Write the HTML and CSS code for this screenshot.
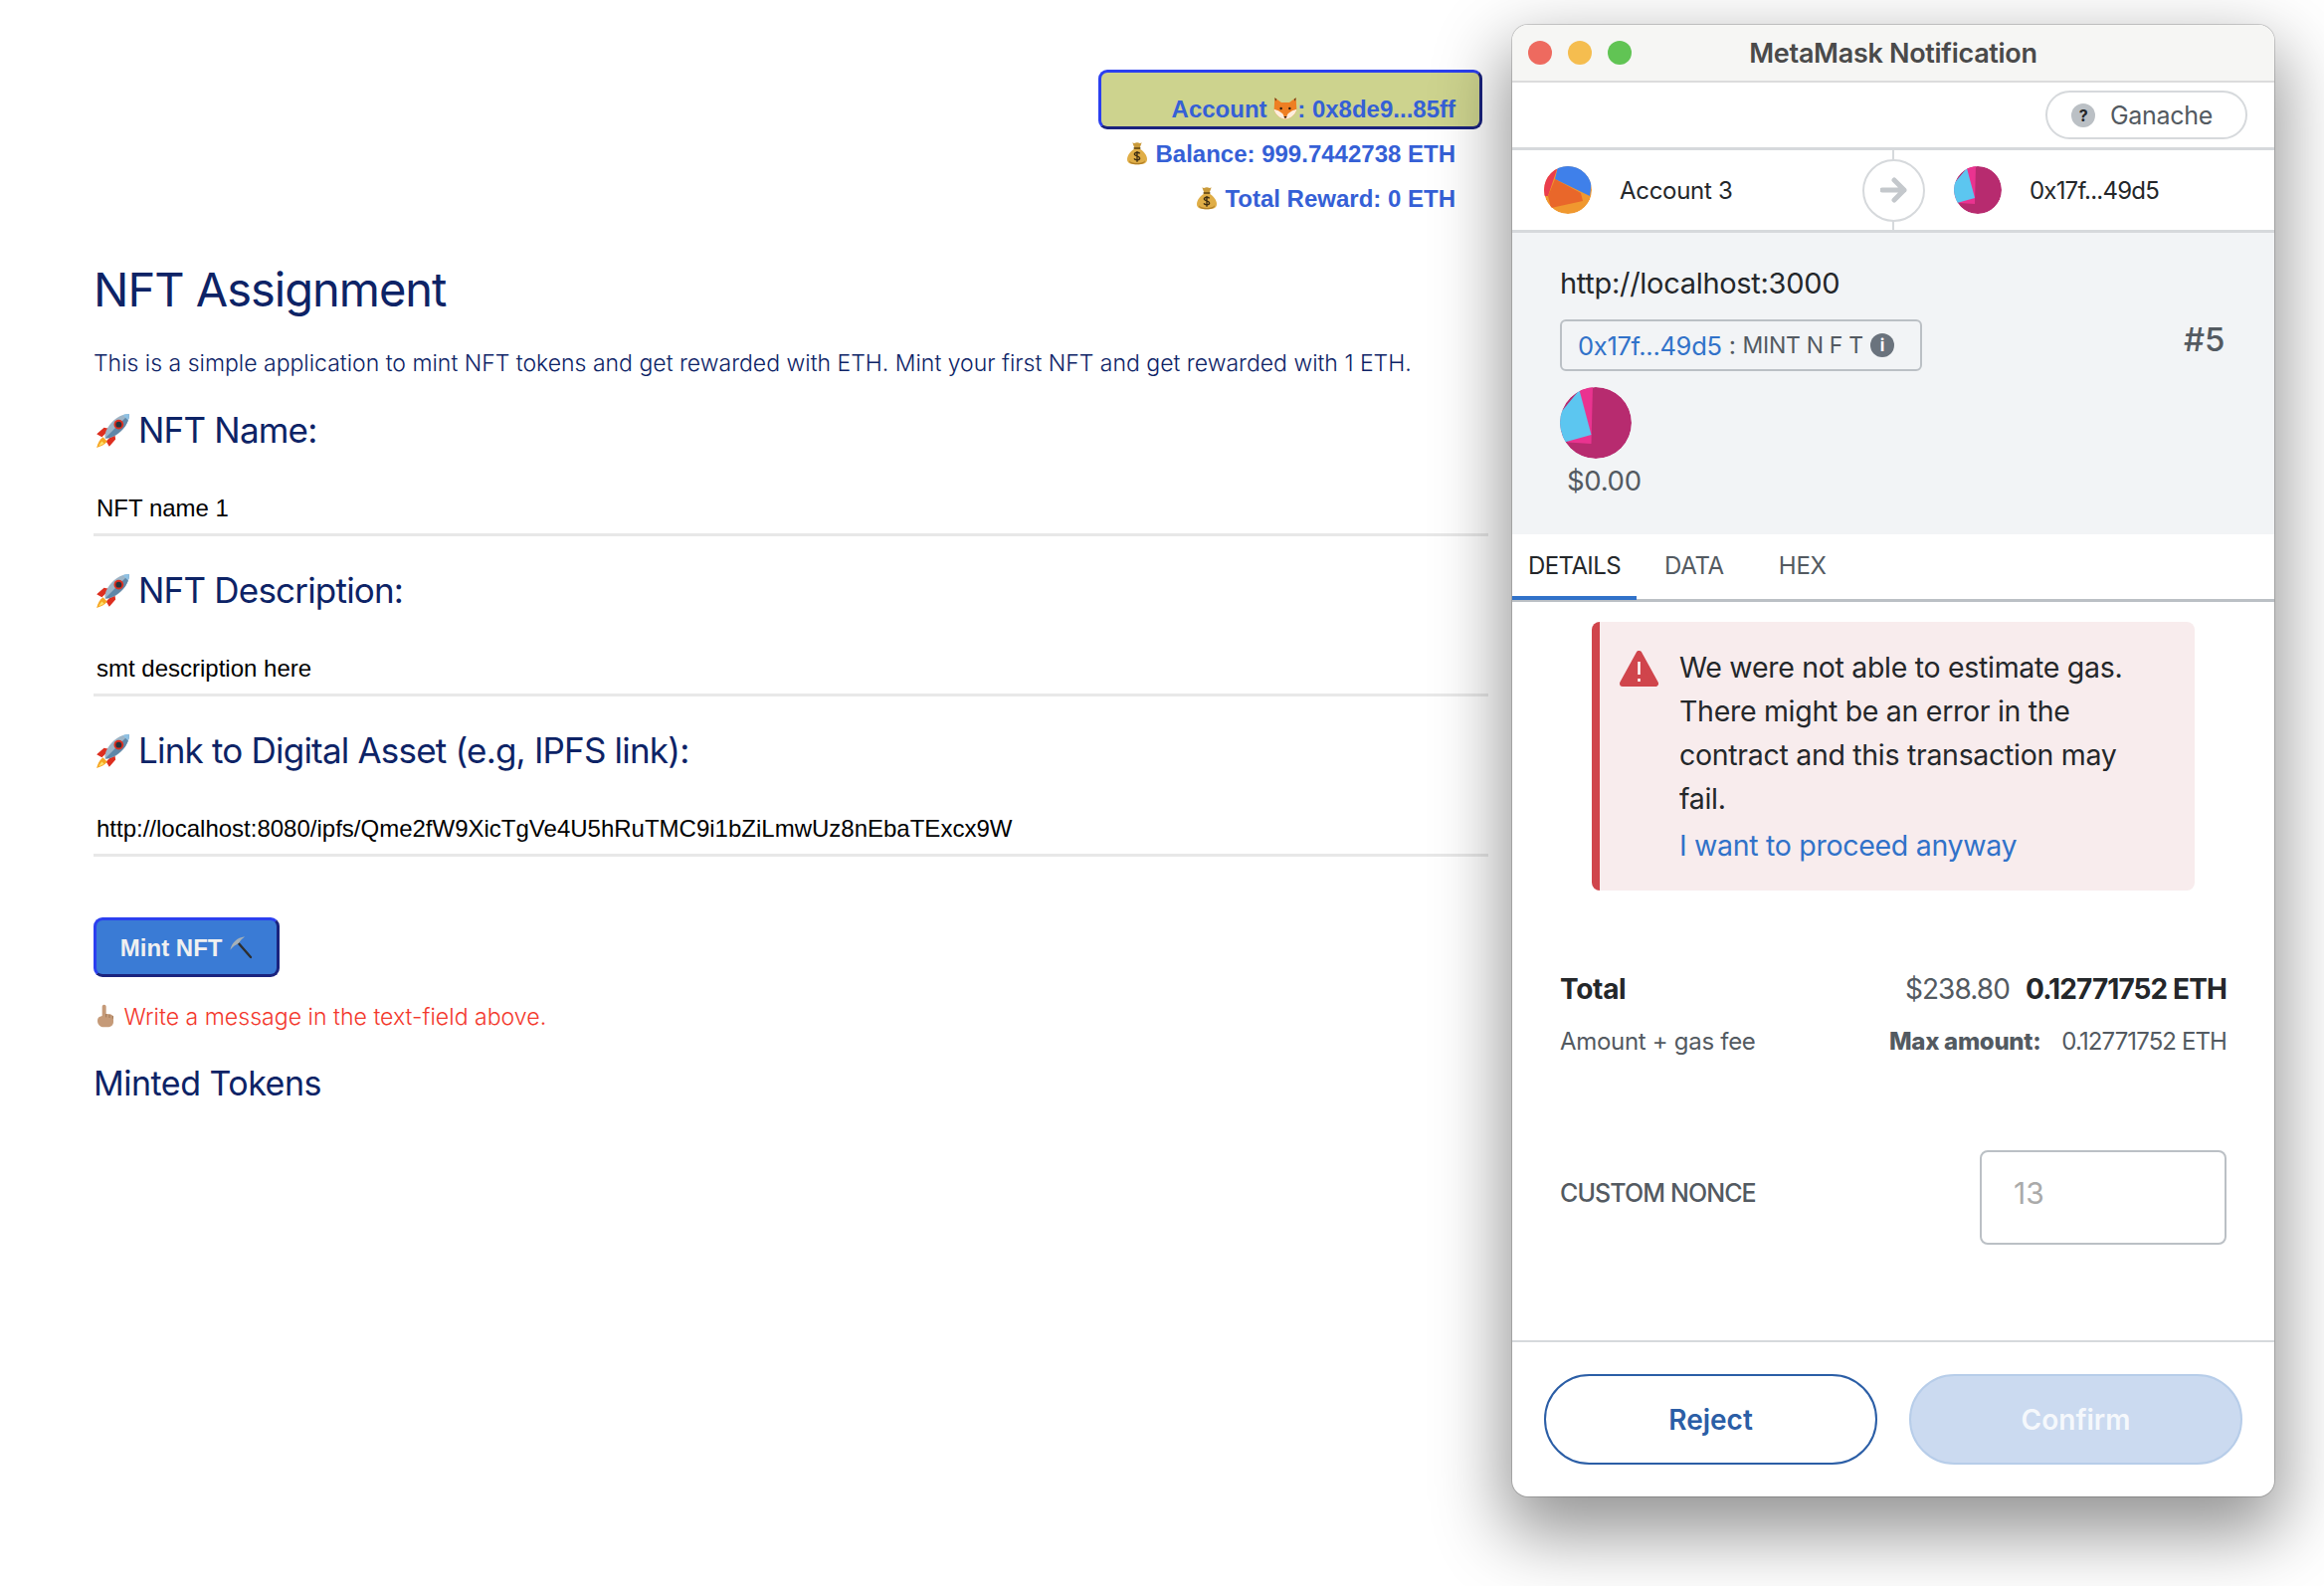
FILE: index.html
```html
<!DOCTYPE html>
<html lang="en">
<head>
    <meta charset="UTF-8">
    <title>NFT Assignment</title>
    <link rel="stylesheet" href="styles.css">
</head>
<body>
    <svg class="sprite" aria-hidden="true">
        <symbol id="rocket" viewBox="0 0 36 36">
            <path d="M3 21l7-6 6 1-8 8zM15 33l6-7-1-6-8 8z" fill="#dd2e1f"/>
            <path d="M9 24c-3 2-5 6-6 10 4-1 8-3 10-6z" fill="#f6a623"/>
            <path d="M8 28c-1 1-2 3-3 4 2 0 3-1 5-2z" fill="#ffe16b"/>
            <path d="M11 25c-1-6 4-14 11-19 4-3 9-4 12-4 0 3-1 8-4 12-5 7-13 12-19 11z" fill="#9db4c6"/>
            <path d="M11 25c5 1 13-4 19-11 3-4 4-9 4-12z" fill="#5f87a8"/>
            <circle cx="24" cy="12" r="4.600" fill="#dd2e1f"/>
            <circle cx="24" cy="12" r="2.800" fill="#27323c"/>
            <path d="M28 3c2-1 4-1 6-1 0 2 0 4-1 6z" fill="#8fc1e3"/>
        </symbol>
        <symbol id="fox" viewBox="0 0 36 36">
            <path d="M2 2l10 7h12l10-7 1 17c0 6-9 15-17 15S1 25 1 19z" fill="#ee7f23"/>
            <path d="M1 19c4 1 9 3 13 7l4 8C10 34 1 25 1 19zM35 19c-4 1-9 3-13 7l-4 8c8 0 17-9 17-15z" fill="#fdeedd"/>
            <circle cx="11.500" cy="18" r="1.800" fill="#2b1a10"/>
            <circle cx="24.500" cy="18" r="1.800" fill="#2b1a10"/>
            <path d="M15.500 30h5L18 33z" fill="#2b1a10"/>
            <path d="M2 2l3 2-2 3zM34 2l-3 2 2 3z" fill="#5a3a20"/>
        </symbol>
        <symbol id="moneybag" viewBox="0 0 36 36">
            <path d="M11 2c3 2 5 0 7 0s4 2 7 0l-3 8h-8z" fill="#c99a3a"/>
            <path d="M13 9h10v3H13z" fill="#7a5a1c"/>
            <path d="M13 12h10c6 4 10 10 10 15 0 6-5 8-15 8S3 33 3 27c0-5 4-11 10-15z" fill="#e0ae47"/>
            <path d="M6 29c2 3 6 4 12 4s10-1 12-4c0 4-5 6-12 6S6 33 6 29z" fill="#b07f28"/>
            <path d="M22 18.500c-1-2-7-2.500-8 .5s8 3 8 6.500-7 3.500-8.500 .5M18 15v16" fill="none" stroke="#3d2c10" stroke-width="2"/>
        </symbol>
        <symbol id="pick" viewBox="0 0 36 36">
            <path d="M13 10l20 23" stroke="#2e2e2e" stroke-width="3.500" stroke-linecap="round"/>
            <path d="M2 22C5 11 12 4 24 2c-3 3-6 5-7 7l-2 3c-4 2-9 5-13 10z" fill="#a5b0b8"/>
        </symbol>
        <symbol id="hand" viewBox="0 0 36 36">
            <path d="M13 4c0-4 6-4 6 0v11c5 0 10 1 11 4v8c0 5-4 8-9 8h-5c-6 0-10-4-10-10 0-4 2-6 7-7z" fill="#c59a78"/>
            <path d="M19 15v5M24 16v5M29 18v4" stroke="#96704f" stroke-width="1.200"/>
        </symbol>
    </svg>

    <main class="app">
        <div class="wallet">
            <button class="account-btn">Account <svg class="emoji"><use href="#fox"/></svg>: 0x8de9...85ff</button>
            <div class="wallet-line"><svg class="emoji"><use href="#moneybag"/></svg> Balance: 999.7442738 ETH</div>
            <div class="wallet-line"><svg class="emoji"><use href="#moneybag"/></svg> Total Reward: 0 ETH</div>
        </div>

        <h1>NFT Assignment</h1>
        <p class="intro">This is a simple application to mint NFT tokens and get rewarded with ETH. Mint your first NFT and get rewarded with 1 ETH.</p>

        <div class="form-group">
            <label for="nftName"><svg class="emoji rocket"><use href="#rocket"/></svg> NFT Name:</label>
            <input type="text" id="nftName" value="NFT name 1">
        </div>
        <div class="form-group">
            <label for="nftDesc"><svg class="emoji rocket"><use href="#rocket"/></svg> NFT Description:</label>
            <input type="text" id="nftDesc" value="smt description here">
        </div>
        <div class="form-group">
            <label for="nftLink"><svg class="emoji rocket"><use href="#rocket"/></svg> Link to Digital Asset (e.g, IPFS link):</label>
            <input type="text" id="nftLink" value="http://localhost:8080/ipfs/Qme2fW9XicTgVe4U5hRuTMC9i1bZiLmwUz8nEbaTExcx9W">
        </div>

        <button class="mint-btn">Mint NFT <svg class="emoji"><use href="#pick"/></svg></button>
        <p class="status"><svg class="emoji"><use href="#hand"/></svg> Write a message in the text-field above.</p>
        <h2>Minted Tokens</h2>
    </main>

    <section class="popup">
        <header class="titlebar">
            <span class="light red"></span>
            <span class="light yellow"></span>
            <span class="light green"></span>
            <span class="popup-title">MetaMask Notification</span>
        </header>

        <div class="network-row">
            <div class="network-pill"><span class="help-dot">?</span>Ganache</div>
        </div>

        <div class="party-row">
            <div class="party">
                <svg class="identicon" viewBox="0 0 48 48">
                    <circle cx="24" cy="24" r="24" fill="#f0982f"/>
                    <path d="M14 0L4 30L-2 30L0 0z" fill="#ea3d4d"/>
                    <path d="M14 0L11 13L46 30L50 0z" fill="#3f80ea"/>
                    <path d="M11 13L37 27L39 35L7 42L4 30z" fill="#e9672a"/>
                </svg>
                <span>Account 3</span>
            </div>
            <div class="party-arrow">
                <svg viewBox="0 0 28 26" width="28" height="26"><path d="M2 13h22M14 3l10 10-10 10" fill="none" stroke="#c4c8cc" stroke-width="5" stroke-linecap="round" stroke-linejoin="round"/></svg>
            </div>
            <div class="party party-to">
                <svg class="identicon" viewBox="0 0 48 48"><use href="#jazz"/></svg>
                <span class="short-addr">0x17f...49d5</span>
            </div>
        </div>

        <div class="summary">
            <div class="origin">http://localhost:3000</div>
            <div class="method-row">
                <div class="method"><a>0x17f...49d5</a><span class="method-sep">:</span><span class="method-name">MINT N F T</span><span class="info-dot">i</span></div>
                <span class="nonce-tag">#5</span>
            </div>
            <svg class="identicon big" viewBox="0 0 48 48">
                <g id="jazz">
                    <circle cx="24" cy="24" r="24" fill="#b72b6f"/>
                    <path d="M3 42L7 42L5 39z" fill="#f0982f"/>
                    <path d="M13 2L22 -1L21 38L5 37z" fill="#ea3390"/>
                    <path d="M13 2L21 32L3 37L-2 20z" fill="#5cc6f0"/>
                </g>
            </svg>
            <div class="fiat">$0.00</div>
        </div>

        <nav class="tabs">
            <a class="tab active">DETAILS</a>
            <a class="tab">DATA</a>
            <a class="tab">HEX</a>
        </nav>

        <div class="alert">
            <svg class="alert-icon" viewBox="0 0 39 38"><path d="M19.500 3L36 33H3z" fill="#d0454c" stroke="#d0454c" stroke-width="6" stroke-linejoin="round"/><path d="M19.500 11v13M19.500 28v3" stroke="#fff" stroke-width="2.500"/></svg>
            <div class="alert-body">
                <p>We were not able to estimate gas. There might be an error in the contract and this transaction may fail.</p>
                <a>I want to proceed anyway</a>
            </div>
        </div>

        <div class="totals">
            <div class="total-row">
                <strong>Total</strong>
                <span class="total-val"><span class="usd">$238.80</span><strong>0.12771752 ETH</strong></span>
            </div>
            <div class="total-row sub">
                <span>Amount + gas fee</span>
                <span class="total-val"><strong>Max amount:</strong><span class="max-val">0.12771752 ETH</span></span>
            </div>
        </div>

        <div class="nonce-row">
            <label for="nonce">CUSTOM NONCE</label>
            <input type="text" id="nonce" placeholder="13">
        </div>

        <footer class="actions">
            <button class="pill reject">Reject</button>
            <button class="pill confirm">Confirm</button>
        </footer>
    </section>
</body>
</html>
```

FILE: styles.css
```css
* {
    box-sizing: border-box;
}
html, body {
    margin: 0;
    height: 100%;
}
body {
    position: relative;
    background: #fff;
    overflow: hidden;
    font-family: Inter, sans-serif;
}
.sprite {
    position: absolute;
    width: 0;
    height: 0;
}
.emoji {
    width: 24px;
    height: 24px;
    vertical-align: -3px;
}

/* dapp page */
.app {
    width: 1496px;
    padding: 70px 0 0 94px;
    color: #0d2366;
}
.wallet {
    display: flex;
    flex-direction: column;
    align-items: flex-end;
    margin-right: 33px;
    font: bold 24px "Liberation Sans", sans-serif;
    color: #3560d6;
}
.account-btn {
    width: 386px;
    height: 60px;
    margin-right: -27px;
    padding: 20px 24px 0 0;
    text-align: right;
    font: inherit;
    color: inherit;
    background: #cdd38e;
    border: 3px solid;
    border-color: #2b3ff0 #1a237e #1a237e #2b3ff0;
    border-radius: 9px;
}
.wallet-line {
    margin-top: 15px;
    line-height: 30px;
}
.account-btn + .wallet-line {
    margin-top: 10px;
}
h1 {
    margin: 48px 0 0;
    font-size: 47px;
    font-weight: 400;
    line-height: 56px;
    letter-spacing: -1px;
}
.intro {
    margin: 31px 0 0;
    font-size: 23px;
    font-weight: 300;
    line-height: 30px;
}
.form-group {
    height: 161px;
}
.intro + .form-group {
    margin-top: 30px;
}
label {
    display: block;
}
.form-group label {
    font-size: 35px;
    line-height: 44px;
    letter-spacing: -0.800px;
}
.emoji.rocket {
    width: 38px;
    height: 38px;
    margin-right: -2px;
    vertical-align: -7px;
}
.form-group input {
    display: block;
    width: 100%;
    height: 54px;
    margin-top: 31px;
    padding: 0 3px;
    border: 0;
    border-bottom: 3px solid #e8e8e8;
    outline: 0;
    background: transparent;
    color: #000;
    font: 24px "Liberation Sans", sans-serif;
}
.mint-btn {
    display: block;
    width: 187px;
    height: 60px;
    margin-top: 29px;
    padding: 2px 0 0;
    font: bold 24px "Liberation Sans", sans-serif;
    color: #f0f0f0;
    background: #3a7bd5;
    border: 3px solid;
    border-color: #2b3ff0 #1a237e #1a237e #2b3ff0;
    border-radius: 9px;
}
.status {
    margin: 24px 0 0;
    font-size: 23.100px;
    font-weight: 300;
    line-height: 32px;
    color: #f3382c;
}
h2 {
    margin: 29px 0 0;
    font-size: 34px;
    font-weight: 400;
    line-height: 44px;
    letter-spacing: -0.500px;
}

/* metamask window */
.popup {
    position: absolute;
    left: 1520px;
    top: 25px;
    width: 766px;
    height: 1479px;
    display: flex;
    flex-direction: column;
    background: #fff;
    border-radius: 16px;
    box-shadow: 0 0 0 1px rgba(0, 0, 0, 0.16), 0 30px 70px 8px rgba(0, 0, 0, 0.42);
    overflow: hidden;
    color: #24272a;
    letter-spacing: -0.300px;
}
.titlebar {
    position: relative;
    display: flex;
    flex: none;
    align-items: center;
    gap: 16px;
    height: 58px;
    padding-left: 16px;
    background: #f6f6f4;
    border-bottom: 2px solid #dcdcdc;
}
.light {
    width: 24px;
    height: 24px;
    border-radius: 50%;
}
.red { background: #ee6a5f; }
.yellow { background: #f5bd4f; }
.green { background: #61c454; }
.popup-title {
    position: absolute;
    left: 0;
    right: 0;
    text-align: center;
    font-size: 27px;
    font-weight: 600;
    color: #4a4a4a;
}
.network-row {
    display: flex;
    flex: none;
    justify-content: flex-end;
    align-items: center;
    height: 68px;
    padding-right: 27px;
    border-bottom: 3px solid #d6d9dc;
}
.network-pill {
    display: flex;
    align-items: center;
    width: 203px;
    height: 49px;
    padding-left: 24px;
    border: 2px solid #d6d9dc;
    border-radius: 25px;
    font-size: 25px;
    color: #535a61;
}
.help-dot {
    width: 24px;
    height: 24px;
    margin-right: 15px;
    border-radius: 50%;
    background: #bbc0c5;
    color: #24272a;
    font-size: 16px;
    font-weight: 700;
    line-height: 24px;
    text-align: center;
}
.party-row {
    position: relative;
    display: flex;
    flex: none;
    align-items: center;
    height: 83px;
    border-bottom: 3px solid #d6d9dc;
    font-size: 24px;
}
.party {
    display: flex;
    align-items: center;
    gap: 28px;
    width: 352px;
    padding-left: 32px;
}
.party-to {
    width: auto;
    padding-left: 29px;
}
.short-addr {
    letter-spacing: -0.800px;
}
.identicon {
    width: 48px;
    height: 48px;
    border-radius: 50%;
}
.identicon.big {
    display: block;
    width: 72px;
    height: 72px;
    margin-top: 16px;
}
/* connector line behind the arrow */
.party-row::before {
    content: "";
    position: absolute;
    left: 382px;
    top: 0;
    bottom: 0;
    width: 2px;
    background: #d6d9dc;
}
.party-arrow {
    position: relative;
    display: flex;
    flex: none;
    align-items: center;
    justify-content: center;
    width: 63px;
    height: 63px;
    border: 2px solid #d6d9dc;
    border-radius: 50%;
    background: #fff;
}
.summary {
    flex: none;
    height: 303px;
    padding: 31px 49px 0 48px;
    background: #f2f4f6;
}
.origin {
    font-size: 29px;
    line-height: 40px;
}
.method-row {
    display: flex;
    justify-content: space-between;
    align-items: flex-start;
    margin-top: 16px;
}
.method {
    display: flex;
    align-items: center;
    width: 364px;
    height: 52px;
    padding-left: 16px;
    border: 2px solid #bbc0c5;
    border-radius: 6px;
    font-size: 25px;
    color: #535a61;
}
.method a {
    color: #3172c9;
    font-size: 25.500px;
}
.method-sep {
    margin: 0 7px;
}
.method-name {
    font-size: 23px;
}
.info-dot {
    width: 24px;
    height: 24px;
    margin-left: 7px;
    border-radius: 50%;
    background: #6a737d;
    color: #fff;
    font-size: 17px;
    font-weight: 700;
    line-height: 24px;
    text-align: center;
}
.nonce-tag {
    margin: 2px 1px 0 0;
    font-size: 33px;
    font-weight: 500;
    line-height: 36px;
    color: #535a61;
}
.fiat {
    padding-left: 7px;
    font-size: 27.500px;
    line-height: 44px;
    color: #535a61;
}
.tabs {
    display: flex;
    flex: none;
    height: 68px;
    border-bottom: 3px solid #bbc0c5;
    font-size: 24px;
    color: #535a61;
}
.tab {
    height: 66px;
    padding: 17px 17px 0;
    line-height: 30px;
}
.tab.active {
    width: 125px;
    padding-left: 16px;
    letter-spacing: -0.600px;
    color: #24272a;
    border-bottom: 4px solid #3172c9;
}
.tab:nth-child(2) {
    padding: 17px 54px 0 28px;
}
.tab:nth-child(3) {
    padding-left: 1px;
}
.alert {
    display: flex;
    flex: none;
    gap: 21px;
    width: 606px;
    height: 270px;
    margin: 20px 0 0 80px;
    padding: 24px 30px 0 20px;
    background: #f8eced;
    border-left: 8px solid #d0454c;
    border-radius: 8px;
    font-size: 28.500px;
    line-height: 44px;
}
.alert-icon {
    flex: none;
    width: 39px;
    height: 38px;
    margin-top: 5px;
}
.alert-body p {
    margin: 0;
}
.alert-body a {
    display: block;
    margin-top: 3px;
    color: #3172c9;
}
.totals {
    flex: none;
    padding: 79px 48px 0;
}
.total-row {
    display: flex;
    justify-content: space-between;
    height: 53px;
    font-size: 28px;
    line-height: 40px;
}
.total-row strong {
    font-weight: 700;
}
.total-val {
    display: flex;
    gap: 16px;
    letter-spacing: -0.900px;
}
.usd {
    color: #535a61;
}
.total-row.sub {
    font-size: 24px;
    color: #535a61;
}
.total-row.sub .total-val {
    gap: 21px;
    letter-spacing: -0.300px;
}
.total-row.sub .max-val {
    letter-spacing: -0.900px;
}
.total-row.sub strong {
    font-weight: 800;
}
.nonce-row {
    display: flex;
    flex: none;
    justify-content: space-between;
    margin-top: 76px;
    padding: 0 48px;
}
.nonce-row label {
    margin-top: 27px;
    font-size: 25px;
    font-weight: 500;
    line-height: 32px;
    letter-spacing: -0.900px;
    color: #535a61;
}
.nonce-row input {
    width: 248px;
    height: 95px;
    padding: 0 32px 10px;
    border: 2px solid #bbc0c5;
    border-radius: 8px;
    outline: 0;
    font: 30px Inter, sans-serif;
}
.nonce-row input::placeholder {
    color: #aaa;
    opacity: 1;
}
.actions {
    display: flex;
    flex: none;
    gap: 32px;
    height: 157px;
    margin-top: 96px;
    padding: 32px 32px 0;
    border-top: 2px solid #d6d9dc;
}
.pill {
    width: 335px;
    height: 91px;
    border-radius: 46px;
    font: 600 28px Inter, sans-serif;
}
.reject {
    background: #fff;
    color: #2b5ea6;
    border: 2px solid #2b5ea6;
}
.confirm {
    background: #cbdaf0;
    color: #f5f8fc;
    border: 2px solid #b7cde9;
}
```
